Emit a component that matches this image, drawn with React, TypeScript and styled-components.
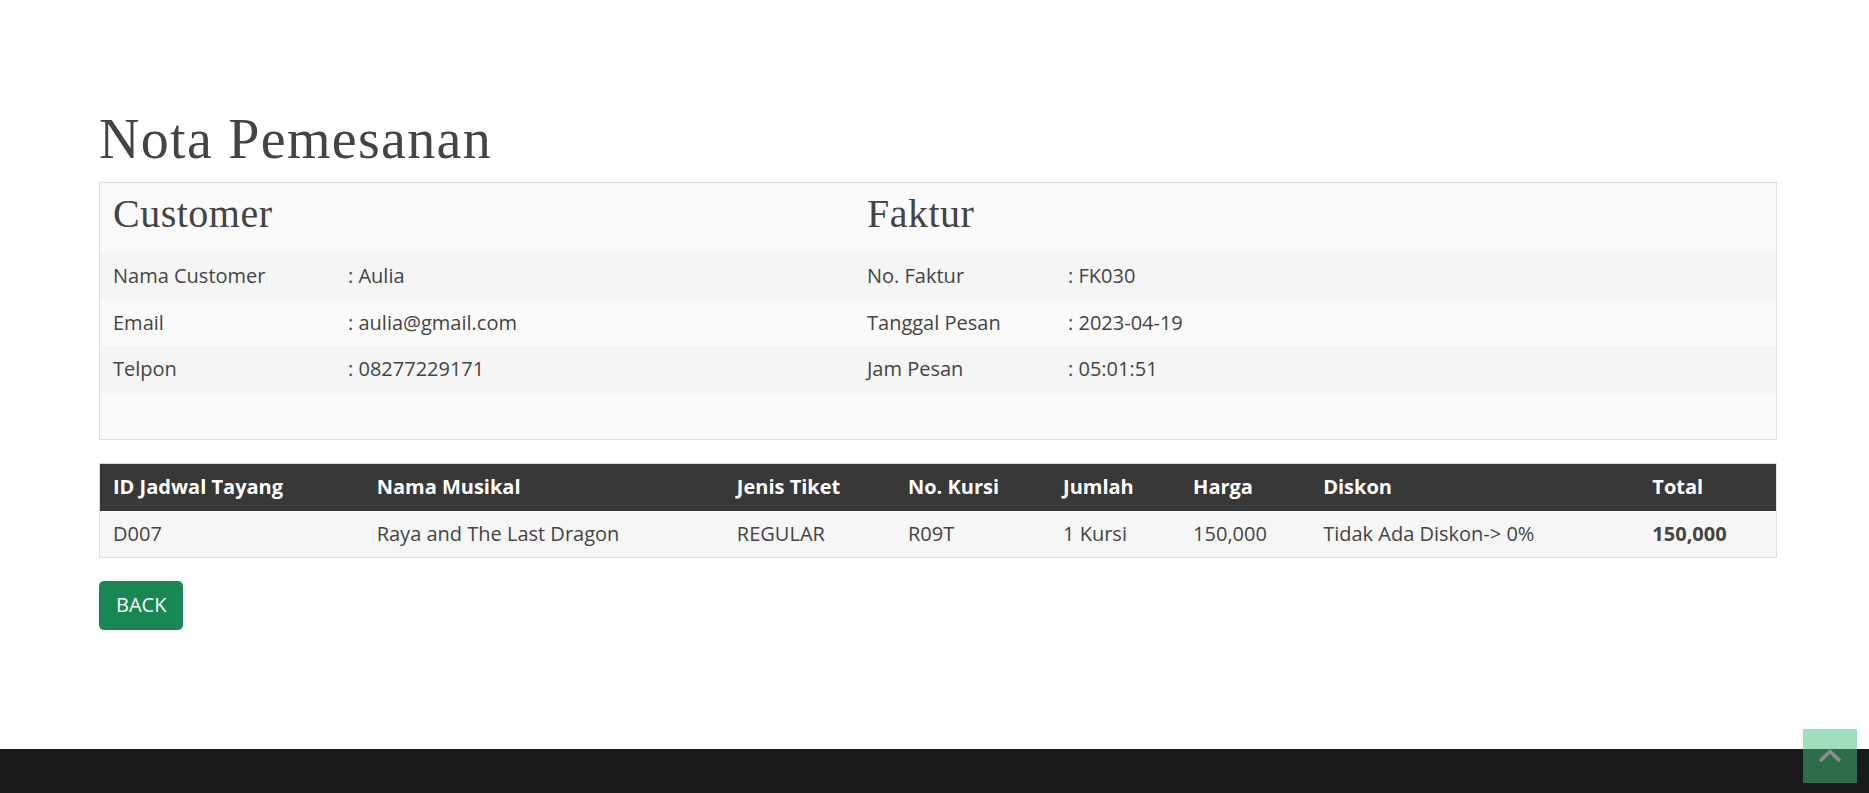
import React from "react";
import styled, { createGlobalStyle } from "styled-components";

const GlobalStyle = createGlobalStyle`
  * { box-sizing: border-box; }
  html, body { margin: 0; padding: 0; height: 100%; overflow: hidden; background: #fff; }
  body {
    font-family: "Open Sans", "Noto Sans", sans-serif;
    font-size: 20px;
    line-height: 30px;
    color: #444;
  }
  #root { min-height: 100%; }
`;

const Page = styled.div`
  display: flex;
  flex-direction: column;
  min-height: 100vh;
`;

const Main = styled.main`
  flex: 1;
  padding: 106px 92px 0 99px;
`;

const Title = styled.h1`
  margin: 0 0 9px;
  font-family: "Liberation Serif", "Times New Roman", serif;
  font-weight: 400;
  font-size: 56px;
  line-height: 67px;
  letter-spacing: 1.3px;
  color: #444;
`;

const InfoBox = styled.section`
  border: 1px solid #dcdcdc;
  background: #fafafa;
`;

const InfoGrid = styled.div<{ $alt?: boolean; $head?: boolean }>`
  display: grid;
  grid-template-columns: 235px 519px 201px 1fr;
  align-items: center;
  background: ${(p) => (p.$alt ? "#f5f5f5" : "#fafafa")};
  padding: ${(p) => (p.$head ? "7px 0 15px" : "0")};
  min-height: ${(p) => (p.$head ? "70px" : "46.5px")};
`;

const Filler = styled.div`
  height: 46px;
`;

const SectionHeading = styled.h2`
  grid-column: span 2;
  margin: 0;
  padding: 0 13px;
  font-family: "Liberation Serif", "Times New Roman", serif;
  font-weight: 400;
  font-size: 40px;
  line-height: 48px;
  letter-spacing: 0.5px;
  color: #444;
`;

const Cell = styled.div`
  padding: 8px 13px;
  white-space: nowrap;
`;

const DataTable = styled.table`
  margin-top: 23px;
  width: 100%;
  border-collapse: collapse;
  table-layout: fixed;
  border: 1px solid #dcdcdc;
`;

const Col = styled.col<{ $w: number }>`
  width: ${(p) => p.$w}px;
`;

const Th = styled.th`
  background: #383838;
  color: #fff;
  font-weight: 700;
  text-align: left;
  padding: 8px 13px 9px;
  white-space: nowrap;
`;

const Td = styled.td<{ $strong?: boolean }>`
  background: #f6f6f6;
  padding: 8px 13px;
  font-weight: ${(p) => (p.$strong ? 700 : 400)};
  white-space: nowrap;
`;

const BackButton = styled.button`
  margin-top: 23px;
  height: 49px;
  padding: 0 17px;
  border: none;
  border-radius: 5px;
  background: #198754;
  color: #fff;
  font-family: "Open Sans", "Noto Sans", sans-serif;
  font-size: 20px;
  line-height: 30px;
  cursor: pointer;
`;

const Footer = styled.footer`
  height: 44px;
  background: #191a1c;
`;

const ScrollTop = styled.button`
  position: fixed;
  right: 12px;
  bottom: 10px;
  width: 54px;
  height: 54px;
  border: none;
  padding: 0;
  background: rgb(66, 192, 124);
  opacity: 0.5;
  display: flex;
  align-items: center;
  justify-content: center;
  cursor: pointer;
`;

const customer = [
  ["Nama Customer", ": Aulia"],
  ["Email", ": aulia@gmail.com"],
  ["Telpon", ": 08277229171"],
];
const faktur = [
  ["No. Faktur", ": FK030"],
  ["Tanggal Pesan", ": 2023-04-19"],
  ["Jam Pesan", ": 05:01:51"],
];

const columns: [string, number][] = [
  ["ID Jadwal Tayang", 264],
  ["Nama Musikal", 360],
  ["Jenis Tiket", 171],
  ["No. Kursi", 155],
  ["Jumlah", 130],
  ["Harga", 130],
  ["Diskon", 329],
  ["Total", 137],
];

const row = [
  "D007",
  "Raya and The Last Dragon",
  "REGULAR",
  "R09T",
  "1 Kursi",
  "150,000",
  "Tidak Ada Diskon-> 0%",
  "150,000",
];

export default function App() {
  return (
    <Page>
      <GlobalStyle />
      <Main>
        <Title>Nota Pemesanan</Title>
        <InfoBox>
          <InfoGrid $head>
            <SectionHeading>Customer</SectionHeading>
            <SectionHeading>Faktur</SectionHeading>
          </InfoGrid>
          {customer.map((c, i) => (
            <InfoGrid key={c[0]} $alt={i % 2 === 0}>
              <Cell>{c[0]}</Cell>
              <Cell>{c[1]}</Cell>
              <Cell>{faktur[i][0]}</Cell>
              <Cell>{faktur[i][1]}</Cell>
            </InfoGrid>
          ))}
          <Filler />
        </InfoBox>
        <DataTable>
          <colgroup>
            {columns.map(([name, w]) => (
              <Col key={name} $w={w} />
            ))}
          </colgroup>
          <thead>
            <tr>
              {columns.map(([name]) => (
                <Th key={name}>{name}</Th>
              ))}
            </tr>
          </thead>
          <tbody>
            <tr>
              {row.map((v, i) => (
                <Td key={i} $strong={i === row.length - 1}>
                  {v}
                </Td>
              ))}
            </tr>
          </tbody>
        </DataTable>
        <BackButton>BACK</BackButton>
      </Main>
      <Footer />
      <ScrollTop aria-label="Back to top">
        <svg width="24" height="14" viewBox="0 0 24 14">
          <polyline
            points="2,12 12,2.5 22,12"
            fill="none"
            stroke="#fff"
            strokeWidth="3.6"
            strokeLinecap="butt"
            strokeLinejoin="miter"
          />
        </svg>
      </ScrollTop>
    </Page>
  );
}
